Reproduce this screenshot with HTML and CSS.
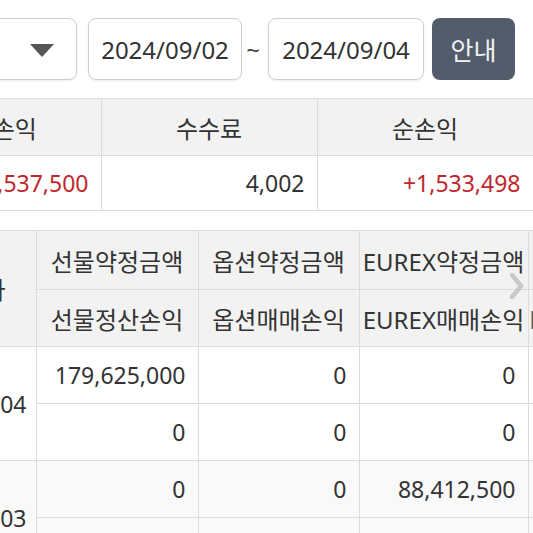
FILE: index.html
```html
<!DOCTYPE html>
<html lang="ko">
<head>
<meta charset="utf-8">
<link rel="stylesheet" href="styles.css">
</head>
<body>
<div class="viewport">
  <div class="toolbar">
    <div class="select">
      <svg class="caret" width="24" height="13" viewBox="0 0 24 13"><polygon points="0,0 24,0 12,13" fill="#555"/></svg>
    </div>
    <div class="date">2024/09/02</div>
    <span class="tilde">~</span>
    <div class="date date2">2024/09/04</div>
    <button class="btn">안내</button>
  </div>

  <table class="summary">
    <colgroup><col class="s1"><col class="s2"><col class="s3"></colgroup>
    <tr class="head"><th>실현손익</th><th>수수료</th><th>순손익</th></tr>
    <tr class="body"><td class="red">+1,537,500</td><td>4,002</td><td class="red">+1,533,498</td></tr>
  </table>

  <div class="detail-wrap">
    <table class="detail">
      <colgroup><col class="d0"><col class="d1"><col class="d2"><col class="d3"><col class="d4"></colgroup>
      <tr class="h1">
        <th rowspan="2" class="date-h">일자</th>
        <th>선물약정금액</th><th>옵션약정금액</th><th>EUREX약정금액</th><th class="last">합계</th>
      </tr>
      <tr class="h2">
        <th>선물정산손익</th><th>옵션매매손익</th><th>EUREX매매손익</th><th class="last left">l매매손익합계</th>
      </tr>
      <tr class="r">
        <td rowspan="2" class="date-c">2024/09/04</td>
        <td>179,625,000</td><td>0</td><td>0</td><td></td>
      </tr>
      <tr class="r">
        <td>0</td><td>0</td><td>0</td><td></td>
      </tr>
      <tr class="r alt">
        <td rowspan="2" class="date-c">2024/09/03</td>
        <td>0</td><td>0</td><td>88,412,500</td><td></td>
      </tr>
      <tr class="r alt">
        <td>0</td><td>0</td><td>0</td><td></td>
      </tr>
    </table>
    <svg class="chevron" width="14" height="26" viewBox="0 0 14 26"><polyline points="2,2 11,13 2,24" fill="none" stroke="#c8c8c8" stroke-width="4.5" stroke-linecap="round" stroke-linejoin="round"/></svg>
  </div>
</div>
</body>
</html>
```

FILE: styles.css
```css
html, body {
  margin: 0;
  padding: 0;
  background: #fff;
}
body {
  font-family: "Noto Sans", "Noto Sans CJK KR", sans-serif;
  color: #333;
}
.viewport {
  width: 533px;
  height: 533px;
  overflow: hidden;
}
.toolbar {
  display: flex;
  align-items: center;
  height: 62px;
  margin-top: 18px;
  margin-left: -43px;
}
.select {
  box-sizing: border-box;
  width: 120px;
  height: 62px;
  border: 1px solid #cfcfcf;
  border-radius: 8px;
  box-shadow: 0 1px 2px rgba(0,0,0,0.08);
  display: flex;
  align-items: center;
  justify-content: flex-end;
  padding-right: 22px;
}
.caret { display: block; margin-top: 2px; }
.date {
  box-sizing: border-box;
  width: 154px;
  height: 62px;
  margin-left: 11px;
  border: 1px solid #cfcfcf;
  border-radius: 8px;
  box-shadow: 0 1px 2px rgba(0,0,0,0.08);
  display: flex;
  align-items: center;
  justify-content: center;
  font-size: 24px;
  color: #333;
}
.date2 { width: 156px; margin-left: 0; }
.tilde {
  width: 26px;
  text-align: center;
  font-size: 24px;
  color: #444;
  padding-right: 4px;
  box-sizing: border-box;
}
.btn {
  box-sizing: border-box;
  width: 83px;
  height: 62px;
  margin-left: 8px;
  border: 0;
  border-radius: 8px;
  background: #525c6b;
  color: #f2f2f2;
  font-family: "Noto Sans CJK KR", sans-serif;
  font-size: 25px;
  padding: 0;
}
table {
  border-collapse: collapse;
  table-layout: fixed;
}
th, td {
  border: 1px solid #dcdcdc;
  padding: 0;
  white-space: nowrap;
  overflow: hidden;
}
th {
  font-weight: normal;
  background: #f2f2f2;
  color: #333;
  text-align: center;
  font-family: "Noto Sans", "Noto Sans CJK KR", sans-serif;
  font-size: 24px;
}
td {
  text-align: right;
  padding-right: 12px;
  color: #333;
  font-size: 23px;
}
.summary {
  margin-top: 18px;
  margin-left: -115px;
  width: 648px;
}
.summary .s1 { width: 216px; }
.summary .s2 { width: 216px; }
.summary .s3 { width: 216px; }
.summary .head { height: 57px; }
.summary .body { height: 55px; }
.summary th:first-child, .summary td:first-child { border-left: 0; }
.red { color: #c1272d; }

.detail-wrap {
  position: relative;
  margin-top: 19px;
}
.detail {
  margin-left: -104px;
  width: 810px;
}
.detail .d0 { width: 140px; }
.detail .d1 { width: 162px; }
.detail .d2 { width: 161px; }
.detail .d3 { width: 169px; }
.detail .d4 { width: 178px; }
.detail .h1 { height: 59px; }
.detail .h2 { height: 57px; }
.detail .r { height: 57px; }
.detail th.date-h {
  text-align: right;
  padding-right: 30px;
  border-left: 0;
}
.detail td.date-c {
  text-align: right;
  padding-right: 9px;
  border-left: 0;
}
.detail th.left {
  text-align: left;
  padding-left: 1px;
  color: #555;
}
.detail .alt td { background: #f9f9f9; }
.chevron {
  position: absolute;
  left: 510px;
  top: 43px;
}
```
